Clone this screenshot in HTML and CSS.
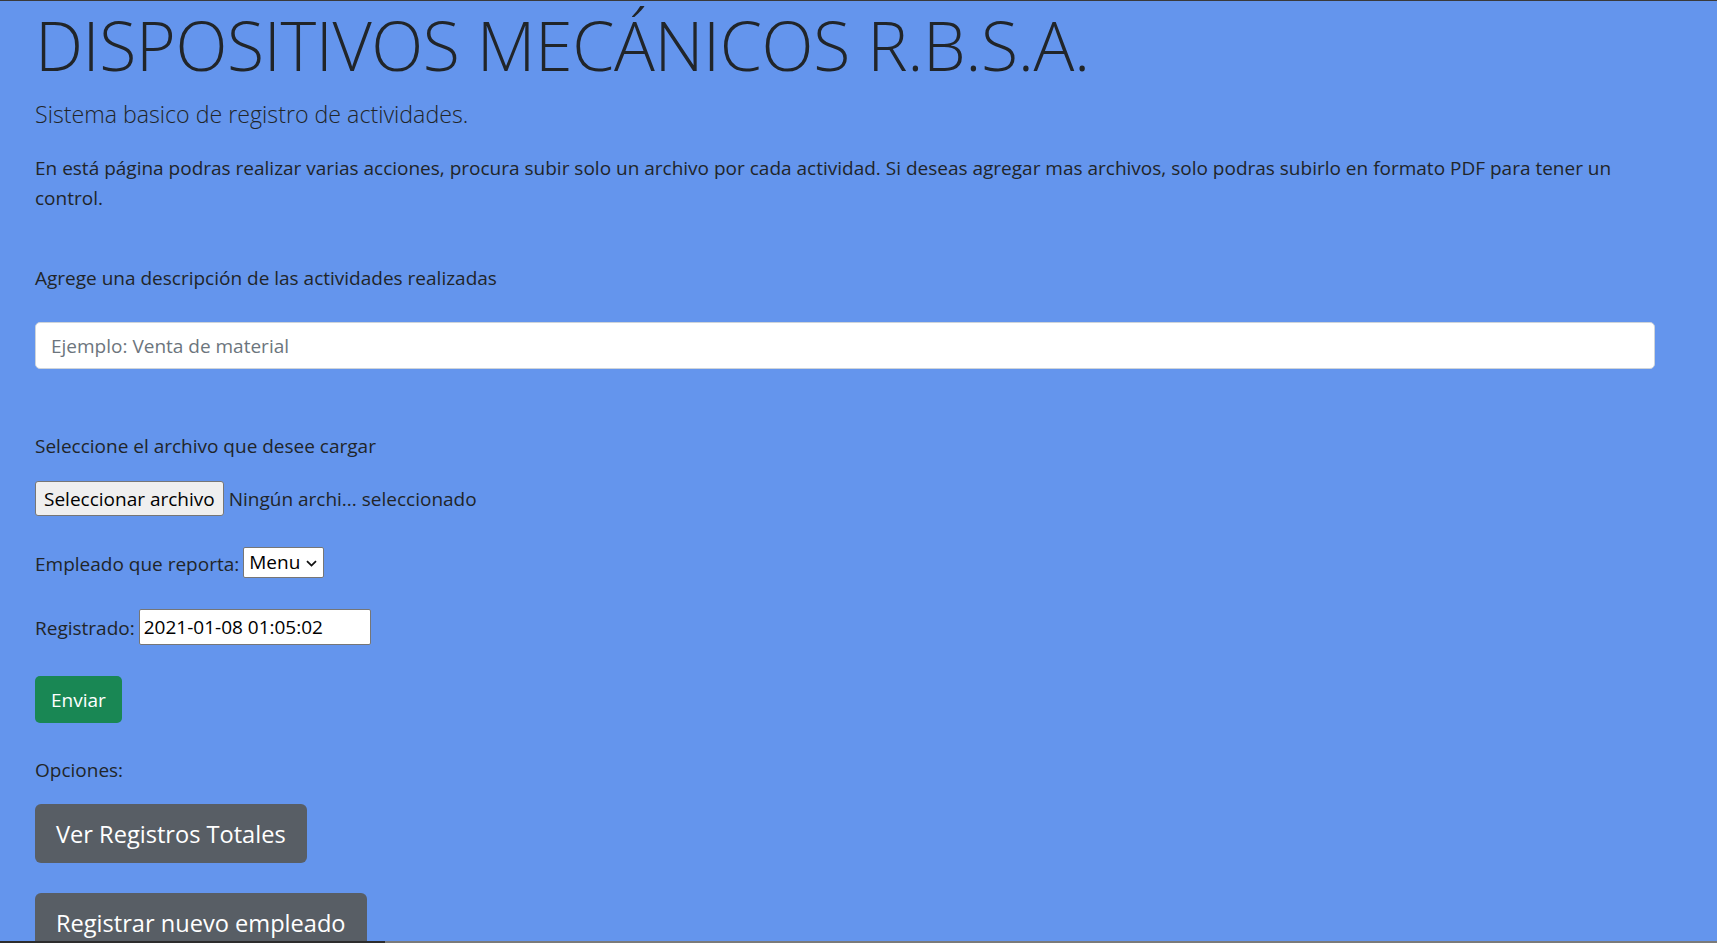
FILE: index.html
```html
<!DOCTYPE html>
<html lang="es">
<head>
<meta charset="utf-8">
<title>Dispositivos Mecánicos R.B.S.A.</title>
<link rel="stylesheet" href="styles.css">
</head>
<body>
<main class="page">
  <h1 class="title">DISPOSITIVOS MECÁNICOS R.B.S.A.</h1>
  <p class="lead">Sistema basico de registro de actividades.</p>
  <p class="intro">En está página podras realizar varias acciones, procura subir solo un archivo por cada actividad. Si deseas agregar mas archivos, solo podras subirlo en formato PDF para tener un control.</p>
  <form class="form">
    <label class="label label-desc" for="desc">Agrege una descripción de las actividades realizadas</label>
    <input id="desc" class="text-input" type="text" placeholder="Ejemplo: Venta de material">
    <label class="label label-file">Seleccione el archivo que desee cargar</label>
    <div class="row row-file">
      <button type="button" class="native-btn">Seleccionar archivo</button>
      <span class="file-name">Ningún archi... seleccionado</span>
    </div>
    <div class="row row-emp">
      <label class="row-label" for="emp">Empleado que reporta:</label>
      <span class="select-wrap">
        <select id="emp" class="select"><option>Menu</option></select>
        <svg class="chevron" width="11" height="7" viewBox="0 0 11 7" aria-hidden="true"><path d="M1 1.2 L5.5 5.6 L10 1.2" fill="none" stroke="#111" stroke-width="1.8"/></svg>
      </span>
    </div>
    <div class="row row-reg">
      <label class="row-label" for="reg">Registrado:</label>
      <input id="reg" class="native-input" type="text" value="2021-01-08 01:05:02">
    </div>
    <button type="button" class="btn btn-success">Enviar</button>
  </form>
  <p class="options">Opciones:</p>
  <a class="btn btn-lg btn-secondary btn-first" href="#">Ver Registros Totales</a>
  <a class="btn btn-lg btn-secondary" href="#">Registrar nuevo empleado</a>
</main>
<div class="bottom-edge"></div>
</body>
</html>
```

FILE: styles.css
```css
* { box-sizing: border-box; }

html, body { margin: 0; }

body {
  background: #6495ed;
  color: #212529;
  font-family: "Open Sans", "Noto Sans", sans-serif;
  font-size: 19px;
  line-height: 30px;
  border-top: 1px solid #3a3a3a;
  overflow: hidden;
  height: 943px;
}

.page {
  width: 1655px;
  padding-left: 35px;
  display: flex;
  flex-direction: column;
  align-items: flex-start;
}

.title {
  margin: 2px 0 8px;
  font-weight: 300;
  font-size: 68px;
  letter-spacing: -0.4px;
  line-height: 84px;
  white-space: nowrap;
}

.lead {
  margin: 0 0 20px;
  font-weight: 300;
  font-size: 23.2px;
  line-height: 38px;
}

.intro {
  margin: 0 0 50px;
  width: 1620px;
}

.form {
  display: flex;
  flex-direction: column;
  align-items: flex-start;
  margin: 0;
}

.label { display: block; }
.label-desc { margin-bottom: 29px; }
.label-file { margin-bottom: 20px; }

.text-input {
  width: 1620px;
  height: 47px;
  padding: 0 15px;
  border: 1px solid #ced4da;
  border-radius: 5px;
  background: #fff;
  font: inherit;
  color: #212529;
  margin: 0 0 62px;
}
.text-input::placeholder { color: #6c757d; }

.row {
  display: flex;
  align-items: center;
}
.row-file { height: 35px; margin-bottom: 31px; }
.row-emp { height: 31px; margin-bottom: 31px; }
.row-reg { height: 36px; margin-bottom: 31px; }

.native-btn {
  height: 35px;
  padding: 0 8px;
  border: 1px solid #767676;
  border-radius: 3px;
  background: #efefef;
  color: #000;
  font: inherit;
}

.file-name { margin-left: 5px; }

.row-label {
  margin-right: 4px;
  padding-top: 2px;
}

.select-wrap {
  position: relative;
  display: inline-block;
  height: 31px;
}

.select {
  appearance: none;
  -webkit-appearance: none;
  width: 81px;
  height: 31px;
  padding: 0 0 0 5px;
  border: 1px solid #767676;
  border-radius: 2px;
  background: #fff;
  color: #000;
  font: inherit;
  line-height: 29px;
}

.chevron {
  position: absolute;
  right: 7px;
  top: 13px;
  pointer-events: none;
}

.native-input {
  width: 232px;
  height: 36px;
  padding: 0 4px;
  border: 1px solid #767676;
  border-radius: 2px;
  background: #fff;
  color: #000;
  font: inherit;
}

.btn {
  display: inline-flex;
  align-items: center;
  justify-content: center;
  border: 1px solid transparent;
  color: #fff;
  text-decoration: none;
  font: inherit;
  cursor: pointer;
}

.btn-success {
  height: 47px;
  padding: 0 15px;
  border-radius: 5px;
  background: #198754;
  margin-bottom: 32px;
}

.options { margin: 0 0 19px; }

.btn-lg {
  height: 59px;
  padding: 1px 20px 0;
  font-size: 23.6px;
  line-height: 37px;
  border-radius: 6px;
}

.btn-secondary { background: #585e65; }

.btn-first { margin-bottom: 30px; }

.bottom-edge {
  position: fixed;
  left: 0;
  right: 0;
  bottom: 0;
  height: 2px;
  background: linear-gradient(to right, #2d2d2d 385px, #7a7a7a 385px);
}
```
